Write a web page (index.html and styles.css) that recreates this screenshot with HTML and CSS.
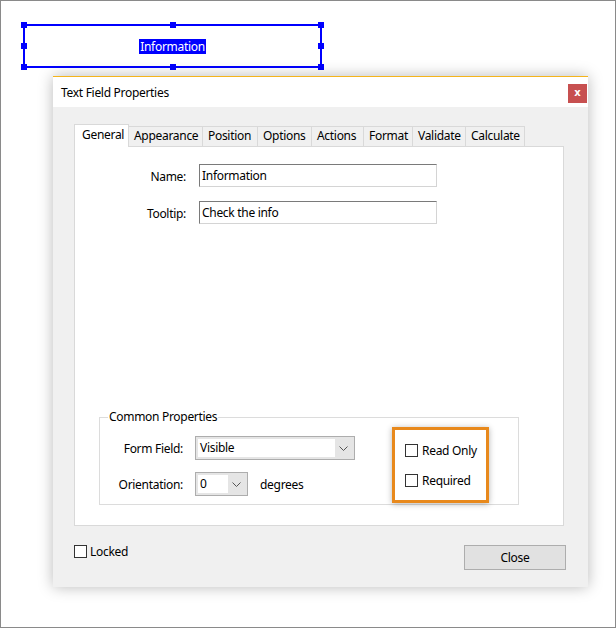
FILE: index.html
```html
<!DOCTYPE html>
<html>
<head>
<meta charset="utf-8">
<link rel="stylesheet" href="styles.css">
</head>
<body>
<div class="page">
  <div class="field">
    <span class="h h-tl"></span><span class="h h-tm"></span><span class="h h-tr"></span>
    <span class="h h-ml"></span><span class="h h-mr"></span>
    <span class="h h-bl"></span><span class="h h-bm"></span><span class="h h-br"></span>
    <span class="field-text">Information</span>
  </div>

  <div class="dialog">
    <div class="titlebar">
      <span class="title">Text Field Properties</span>
      <span class="close-x">x</span>
    </div>
    <div class="body">
      <div class="tabs">
        <div class="tab active">General</div>
        <div class="tab">Appearance</div>
        <div class="tab">Position</div>
        <div class="tab">Options</div>
        <div class="tab">Actions</div>
        <div class="tab">Format</div>
        <div class="tab">Validate</div>
        <div class="tab">Calculate</div>
      </div>
      <div class="panel">
        <div class="form">
          <label class="lbl">Name:</label>
          <div class="input">Information</div>
          <label class="lbl">Tooltip:</label>
          <div class="input">Check the info</div>
        </div>
        <div class="group">
          <div class="legend">Common Properties</div>
          <div class="group-grid">
            <label class="lbl2">Form Field:</label>
            <div class="select wide"><span class="sel-val">Visible</span><span class="arrow"><svg width="9" height="5" viewBox="0 0 9 5"><path d="M0.5 0.5 L4.5 4.5 L8.5 0.5" fill="none" stroke="#555" stroke-width="1"/></svg></span></div>
            <label class="lbl2">Orientation:</label>
            <div class="orient">
              <div class="select narrow"><span class="sel-val">0</span><span class="arrow"><svg width="9" height="5" viewBox="0 0 9 5"><path d="M0.5 0.5 L4.5 4.5 L8.5 0.5" fill="none" stroke="#555" stroke-width="1"/></svg></span></div>
              <span class="deg">degrees</span>
            </div>
          </div>
          <div class="checks">
            <div class="check"><span class="box"></span><span>Read Only</span></div>
            <div class="check"><span class="box"></span><span>Required</span></div>
          </div>
        </div>
      </div>
      <div class="footer">
        <div class="check locked"><span class="box"></span><span>Locked</span></div>
        <div class="btn">Close</div>
      </div>
    </div>
  </div>
</div>
</body>
</html>
```
FILE: styles.css
```css
* { box-sizing: border-box; }
html, body { margin: 0; padding: 0; background: #fff; }
body {
  font-family: "Noto Sans", "Open Sans", "Liberation Sans", sans-serif;
  font-size: 12px;
  letter-spacing: -0.3px;
  color: #000;
}
.page {
  position: relative;
  width: 616px;
  height: 628px;
  border: 1px solid #8a8a8a;
  overflow: hidden;
}

/* form field on the PDF canvas */
.field {
  position: absolute;
  left: 22px;
  top: 23px;
  width: 299px;
  height: 44px;
  border: 2px solid #0000ff;
  display: flex;
  align-items: center;
  justify-content: center;
}
.field-text {
  background: #0000ff;
  color: #fff;
  line-height: 15px;
  padding: 0 1px;
}
.h {
  position: absolute;
  width: 6px;
  height: 6px;
  background: #0000ff;
}
.h-tl { left: -4px; top: -4px; }
.h-tm { left: 145px; top: -4px; }
.h-tr { right: -4px; top: -4px; }
.h-ml { left: -4px; top: 17px; }
.h-mr { right: -4px; top: 17px; }
.h-bl { left: -4px; bottom: -4px; }
.h-bm { left: 145px; bottom: -4px; }
.h-br { right: -4px; bottom: -4px; }

/* dialog window */
.dialog {
  position: absolute;
  left: 52px;
  top: 75px;
  width: 535px;
  height: 511px;
  border-top: 1px solid #f4b41c;
  background: #f0f0f0;
  box-shadow: 0 0 14px rgba(0,0,0,0.28);
  display: flex;
  flex-direction: column;
}
.titlebar {
  height: 30px;
  background: #fff;
  display: flex;
  align-items: center;
  justify-content: space-between;
  padding: 0 1px 0 8px;
}
.title {
  font-size: 12px;
  margin-top: 1px;
}
.close-x {
  width: 19px;
  height: 19px;
  background: #c75050;
  color: #fff;
  font-family: "DejaVu Sans", sans-serif;
  font-weight: bold;
  font-size: 10px;
  letter-spacing: 0;
  line-height: 17px;
  text-align: center;
  margin-top: 3px;
}
.body {
  flex: 1;
  padding: 17px 23px 0 21px;
  display: flex;
  flex-direction: column;
}

/* tabs */
.tabs {
  display: flex;
  align-items: flex-end;
  height: 22px;
  position: relative;
  z-index: 1;
}
.tab {
  height: 20px;
  border: 1px solid #d9d9d9;
  border-bottom: none;
  border-left: none;
  background: #f0f0f0;
  padding: 0 5px;
  line-height: 18px;
  white-space: nowrap;
}
.tab.active {
  height: 23px;
  background: #fff;
  border-left: 1px solid #d9d9d9;
  padding: 0 7px;
  line-height: 19px;
  margin-bottom: -1px;
}
.tab:nth-child(2) { width: 74px; padding-left: 5px; }
.tab:nth-child(3) { width: 55px; }
.tab:nth-child(4) { width: 54px; }
.tab:nth-child(5) { width: 52px; }
.tab:nth-child(6) { width: 49px; }
.tab:nth-child(7) { width: 53px; }
.tab:nth-child(8) { width: 59px; }
.tab.active { width: 55px; }

.panel {
  height: 380px;
  width: 490px;
  background: #fff;
  border: 1px solid #d9d9d9;
  display: flex;
  flex-direction: column;
  padding: 17px 0 20px 24px;
}
.form {
  display: grid;
  grid-template-columns: 87px 238px;
  column-gap: 13px;
  row-gap: 14px;
  align-items: center;
}
.lbl { text-align: right; padding-top: 1px; }
.input {
  height: 23px;
  border: 1px solid #d4d4d4;
  border-top-color: #7a7a7a;
  border-left-color: #7a7a7a;
  padding: 2px 2px 0;
  line-height: 18px;
}

.group {
  margin-top: auto;
  position: relative;
  width: 420px;
  height: 88px;
  border: 1px solid #dcdcdc;
  padding: 18px 0 0 0;
  display: flex;
}
.legend {
  position: absolute;
  left: 8px;
  top: -9px;
  background: #fff;
  padding: 0 1px;
  line-height: 16px;
}
.group-grid {
  display: grid;
  grid-template-columns: 83px auto;
  column-gap: 12px;
  row-gap: 12px;
  align-items: center;
  align-content: start;
}
.lbl2 { text-align: right; }
.select {
  height: 24px;
  border: 1px solid #adadad;
  background: #e5e5e5;
  display: flex;
  padding: 2px;
}
.select.wide { width: 160px; }
.select.narrow { width: 53px; }
.sel-val {
  flex: 1;
  background: #fff;
  padding: 0 2px;
  line-height: 18px;
}
.arrow {
  width: 17px;
  display: flex;
  align-items: center;
  justify-content: center;
  padding-top: 1px;
}
.orient {
  display: flex;
  align-items: center;
  gap: 12px;
}

.checks {
  position: absolute;
  left: 292px;
  top: 9px;
  width: 97px;
  height: 76px;
  background: #fff;
  border: 3px solid #e8891c;
  box-shadow: 0 1px 6px rgba(0,0,0,0.3);
  padding: 14px 0 0 10px;
  display: flex;
  flex-direction: column;
  gap: 17px;
}
.check {
  display: flex;
  align-items: center;
  gap: 4px;
  line-height: 13px;
}
.box {
  width: 13px;
  height: 13px;
  border: 1px solid #333;
  background: #fff;
  flex: none;
}

.footer {
  display: flex;
  justify-content: space-between;
  align-items: flex-start;
  padding-top: 19px;
}
.locked { margin-top: 0; gap: 3px; }
.btn {
  width: 102px;
  height: 25px;
  border: 1px solid #adadad;
  background: #e1e1e1;
  text-align: center;
  line-height: 23px;
  margin-right: -1px;
}
```
